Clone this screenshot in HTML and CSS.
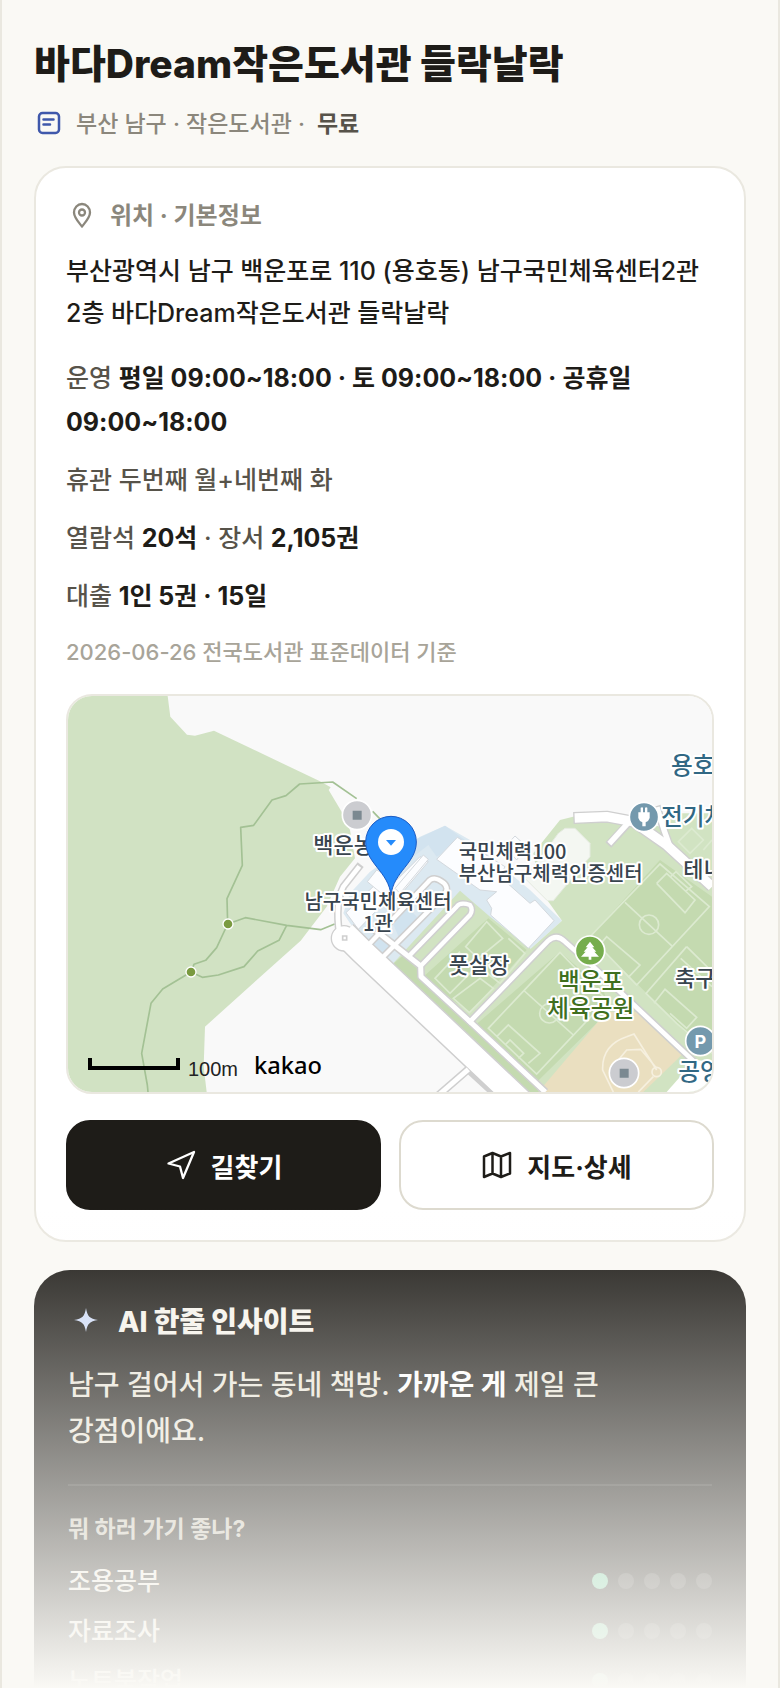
FILE: index.html
```
<!DOCTYPE html>
<html lang="ko">
<head>
    <meta charset="UTF-8">
    <meta name="viewport" content="width=device-width, initial-scale=1.0">
    <title>바다Dream작은도서관 들락날락</title>
    <link rel="stylesheet" href="styles.css">
</head>
<body>
    <main class="app">
        <h1 class="title">바다Dream작은도서관 들락날락</h1>
        <div class="meta">
            <svg class="meta-icon" viewBox="0 0 30 30" fill="none" stroke="#3f58ab" stroke-width="2.500" stroke-linecap="round">
                <rect x="5" y="4" width="20" height="20" rx="3.500"/>
                <path d="M9.500 10.500h10M9.500 15.500h6.500"/>
            </svg>
            <span>부산 남구 · 작은도서관 ·</span>
            <strong>무료</strong>
        </div>

        <section class="card">
            <h2 class="card-head">
                <svg class="head-icon" viewBox="0 0 32 32" fill="none" stroke="#8b877c" stroke-width="2.300">
                    <path d="M16 26.500C12 21.500 8 17.500 8 12.500a8 8.500 0 0 1 16 0C24 17.500 20 21.500 16 26.500z" stroke-linejoin="round"/>
                    <circle cx="16" cy="12.500" r="3"/>
                </svg>
                위치 · 기본정보
            </h2>
            <p class="address">부산광역시 남구 백운포로 110 (용호동) 남구국민체육센터2관 2층 바다Dream작은도서관 들락날락</p>
            <div class="info">
                <p>운영 <b>평일 09:00~18:00 · 토 09:00~18:00 · 공휴일 09:00~18:00</b></p>
                <p>휴관 두번째 월+네번째 화</p>
                <p>열람석 <b>20석</b> · 장서 <b>2,105권</b></p>
                <p>대출 <b>1인 5권 · 15일</b></p>
            </div>
            <p class="source">2026-06-26 전국도서관 표준데이터 기준</p>

            <div class="map">
                <svg viewBox="24 18 1932 1188" preserveAspectRatio="xMidYMid slice">
                    <rect x="24" y="18" width="1932" height="1188" fill="#f9f9f9"/>

                    <!-- 산 -->
                    <path fill="#d1e2c3" d="M24 18H323L331 80 381 134 405 137 462 122 780 274 812 292 806 300 844 364 870 420 885 505 840 560 800 650 722 752 435 1010 431 1130 440 1206H24z"/>
                    <g fill="none" stroke="#a3c194" stroke-width="5" stroke-linejoin="round">
                        <path d="M503 702L501 626 547 526 542 412 581 406 636 330 678 317 719 282 818 276 890 326M938 364L965 392"/>
                        <path d="M503 702L556 683 680 706 782 719 824 702M680 706L657 751 593 783 552 830 475 855 427 862 393 846 308 897 273 940 245 1090 262 1185 264 1206"/>
                        <path d="M503 702L470 773 437 811 402 823 393 846"/>
                    </g>
                    <g fill="#7a9a40" stroke="#fff" stroke-width="4">
                        <circle cx="504" cy="702" r="15"/>
                        <circle cx="393" cy="846" r="15"/>
                    </g>

                    <!-- 주차장, 공원 바닥 -->
                    <path fill="#dce9f1" d="M930 545L1080 440 1155 407 1230 450 1410 600 1506 692 1412 776 1345 745 1200 605 1140 670 1000 825 920 760 870 700 850 670 870 610z"/>
                    <path fill="#d2e3ef" d="M1070 447L1155 407 1215 450 1130 500 1105 465 1060 500z"/>
                    <path fill="#d1e3ef" d="M955 735L998 770 960 800 922 765zM990 680L1030 640 1080 690 1020 750z"/>
                    <path fill="#d1e3c2" d="M1200 602L1290 680 1412 776 1506 692 1440 600 1420 490 1500 390 1560 375 1700 380 1900 440 1956 500V1206H1460L1225 985 1090 900 990 830z"/>
                    <path fill="#d1e3c2" d="M1820 370L1956 370V600L1830 480z"/>
                    <path fill="#c4dab0" d="M1285 685L1400 780 1228 968 1090 860zM1500 785L1630 900 1650 960 1400 1206 1235 1015zM1800 510L1956 620V1090L1870 1020 1590 740zM985 835L1030 795 1075 840 1130 900 1440 1206H1390z"/>
                    <path fill="#f4f7f2" stroke="#e5ebe0" stroke-width="3" d="M1495 430L1515 415H1545L1590 460 1590 500 1480 632 1462 632 1395 565z"/>

                    <!-- 운동장 라인 -->
                    <g fill="none" stroke="#dcead0" stroke-width="5">
                        <path d="M1800 522L1948 650 1730 885 1590 740zM1695 637L1838 770M1790 580L1820 550 1905 630 1875 668 1790 580M1832 560L1848 545 1895 590 1875 605"/>
                        <circle cx="1767" cy="704" r="29"/>
                        <path d="M1610 775L1640 740 1740 825 1705 862M1880 770L1758 910 1850 1000 1956 1090M1880 770L1956 845M1862 805L1956 890"/>
                        <path d="M1782 940L1815 898 1910 982 1880 1015 1830 970"/>
                        <path d="M1500 787L1285 1015 1430 1152 1640 930zM1390 900L1540 1035M1310 1040L1345 1005 1440 1090 1405 1120M1335 1065L1350 1050 1391 1090 1375 1105"/>
                        <circle cx="1468" cy="970" r="29"/>
                        <path d="M1280 695L1217 770 1255 805 1328 745zM1345 745L1395 790 1320 880 1270 840M1200 785L1125 865 1170 910 1250 830M1260 865L1180 925 1228 968 1300 895z"/>
                        <path d="M1895 415L1930 450 1890 490 1855 455zM1930 480L1956 450"/>
                    </g>

                    <!-- 야구장 -->
                    <path fill="#eadfc0" d="M1640 965H1730L1865 1095 1750 1206H1435z"/>
                    <g fill="none" stroke="#f6f0df" stroke-width="5">
                        <path d="M1660 1206L1628 1140Q1625 1065 1700 1040L1722 1032 1790 1140M1675 1110L1700 1080 1742 1078 1790 1135"/>
                        <circle cx="1790" cy="1146" r="14"/>
                        <path d="M1780 1160L1735 1206"/>
                    </g>

                    <!-- 건물 -->
                    <g fill="#fcfdff" stroke="#d4d9de" stroke-width="3">
                        <path d="M1192 442L1130 508 1260 600 1310 605 1280 630 1295 655 1292 675 1405 775 1482 692 1425 630 1410 640 1320 560 1335 530z"/>
                        <path d="M1335 470L1365 438 1400 470 1370 510z"/>
                        <path d="M858 668L950 580 990 620 895 718z"/>
                        <path d="M922 575L950 540 1010 570 1080 500 1105 515 1000 640z"/>
                        <path d="M1090 495L1105 508 1020 610 1005 595z"/>
                    </g>

                    <!-- 도로 -->
                    <g fill="none" stroke-linejoin="round">
                        <g stroke="#cfcfcf">
                            <circle cx="852" cy="745" r="20" stroke-width="40"/>
                            <path stroke-width="80" d="M852 730L907 785 1450 1298"/>
                            <path stroke-width="23" d="M902 524L850 590Q825 640 838 730"/>
                            <path stroke-width="24" d="M945 720L1082 828 1083 860 1230 995 1456 1206"/>
                            <path stroke-width="23" d="M1230 995L1465 752Q1490 730 1515 755L1600 830 1950 1160"/>
                            <path stroke-width="22" d="M925 765L1105 575Q1120 555 1150 578 1170 595 1150 618L970 800M1050 795L1190 650Q1200 635 1230 645 1240 660 1230 675L1085 825"/>
                            <path stroke-width="36" d="M1540 384L1640 380 1720 395 1820 465 1956 590"/>
                            <path stroke-width="24" d="M1645 465L1705 400M1790 348L1812 420 1830 470"/>
                            <path stroke-width="24" d="M1225 1138L1135 1216M1225 1138L1310 1216"/>
                        </g>
                        <g stroke="#fff">
                            <circle cx="852" cy="745" r="18" stroke-width="36"/>
                            <path stroke-width="71" d="M852 730L907 785 1450 1298"/>
                            <path stroke-width="14" d="M898 529L850 590Q825 640 838 730"/>
                            <path stroke-width="15" d="M949 723L1082 828 1083 860 1230 995 1456 1206"/>
                            <path stroke-width="14" d="M1225 1000L1465 752Q1490 730 1515 755L1600 830 1950 1160"/>
                            <path stroke-width="13" d="M925 765L1105 575Q1120 555 1150 578 1170 595 1150 618L966 804M1050 795L1190 650Q1200 635 1230 645 1240 660 1230 675L1085 825"/>
                            <path stroke-width="28" d="M1544 384L1640 380 1720 395 1820 465 1956 590"/>
                            <path stroke-width="16" d="M1648 461L1708 395M1791 352L1812 420 1830 470"/>
                            <path stroke-width="15" d="M1225 1138L1135 1216"/>
                        </g>
                    </g>
                    <path d="M848 738h12v12h-12z" fill="#fff" stroke="#cfcfcf" stroke-width="5"/>
                    <path d="M1820 1206L1905 1110 1956 1115V1206z" fill="#fff"/>

                    <!-- 장소 아이콘 -->
                    <g stroke="#fff" stroke-width="5">
                        <circle cx="891" cy="375" r="44" fill="#cbccd0"/>
                        <circle cx="1692" cy="1149" r="44" fill="#cbccd0"/>
                        <circle cx="1752" cy="381" r="44" fill="#7499ad"/>
                        <circle cx="1921" cy="1053" r="44" fill="#7499ad"/>
                        <circle cx="1590" cy="782" r="44" fill="#76ad4d"/>
                    </g>
                    <path fill="#7b8991" d="M878 362h27v27h-27zM1679 1136h27v27h-27z"/>
                    <path fill="#fff" d="M1742 353q5-3 7 0v14h6v-14q4-3 7 0v14h7v17q-3 10-12 13v12h-10v-12q-9-3-12-13v-17h7z"/>
                    <path fill="#fff" d="M1590 755l13 17h-6l12 13h-6l14 15h-23v9h-8v-9h-23l14-15h-6l12-13h-6z"/>

                    <!-- 지명 -->
                    <g class="label">
                        <text class="poi" x="760" y="490">백운농장</text>
                        <text class="place" x="954" y="656" text-anchor="middle">남구국민체육센터</text>
                        <text class="place" x="954" y="724" text-anchor="middle">1관</text>
                        <text class="place" x="1196" y="506">국민체력100</text>
                        <text class="place" x="1196" y="573">부산남구체력인증센터</text>
                        <text class="poi" x="1166" y="848">풋살장</text>
                        <text class="poi" x="1870" y="562">테니스장</text>
                        <text class="poi" x="1845" y="888">축구장</text>
                        <text class="park" x="1592" y="900" text-anchor="middle">백운포</text>
                        <text class="park" x="1592" y="980" text-anchor="middle">체육공원</text>
                        <text class="transit" x="1833" y="253">용호동</text>
                        <text class="transit" x="1803" y="406">전기차</text>
                        <text class="transit" x="1855" y="1170">공영주차장</text>
                    </g>
                    <text class="label-p" x="1921" y="1073" text-anchor="middle">P</text>

                    <!-- 핀 -->
                    <path fill="#258bfb" stroke="#1c5cc4" stroke-width="3" d="M993 616C986 545 917 520 917 456a76 77 0 0 1 152 0C1069 520 1000 545 993 616z"/>
                    <circle cx="993" cy="456" r="39" fill="#fff"/>
                    <path fill="#258bfb" d="M978 450h30l-15 17z"/>

                    <!-- 축척 -->
                    <path fill="none" stroke="#000" stroke-width="12" d="M90 1104V1134H354V1104"/>
                    <text class="scale" x="384" y="1157">100m</text>
                    <text class="brand" x="582" y="1151">kakao</text>
                </svg>
            </div>

            <div class="actions">
                <button class="btn btn-dark" type="button">
                    <svg viewBox="0 0 32 32" fill="none" stroke="currentColor" stroke-width="2.300" stroke-linejoin="round"><path d="M3.500 14.500L29 3 18 29 15 17.500z"/></svg>
                    길찾기
                </button>
                <button class="btn btn-line" type="button">
                    <svg viewBox="0 0 32 32" fill="none" stroke="currentColor" stroke-width="2.500" stroke-linejoin="round"><path d="M3 7.500L11.500 4 20 7.500 29 4V24.500L20 28 11.500 24.500 3 28zM11.500 4V24.500M20 7.500V28"/></svg>
                    지도·상세
                </button>
            </div>
        </section>

        <section class="insight">
            <h2 class="insight-head">
                <svg viewBox="0 0 36 36"><path fill="#cfdcf8" d="M18 4C19.500 12.500 21.500 14.500 30 16 21.500 17.500 19.500 19.500 18 28 16.500 19.500 14.500 17.500 6 16 14.500 14.500 16.500 12.500 18 4z"/></svg>
                AI 한줄 인사이트
            </h2>
            <p class="insight-text">남구 걸어서 가는 동네 책방. <b>가까운 게</b> 제일 큰 강점이에요.</p>
            <div class="uses">
                <h3>뭐 하러 가기 좋나?</h3>
                <ul>
                    <li>조용공부 <span class="dots"><i class="on"></i><i></i><i></i><i></i><i></i></span></li>
                    <li>자료조사 <span class="dots"><i class="on"></i><i></i><i></i><i></i><i></i></span></li>
                    <li>노트북작업 <span class="dots"><i class="on"></i><i></i><i></i><i></i><i></i></span></li>
                </ul>
            </div>
        </section>
        <div class="fade"></div>
    </main>
</body>
</html>
```
FILE: styles.css
```
* {
    box-sizing: border-box;
}

body {
    margin: 0;
    font-family: Inter, "Noto Sans CJK KR", sans-serif;
    font-weight: 500;
    background-color: #faf9f5;
    color: #1e1c18;
    word-break: keep-all;
}

h1, h2, h3, p, ul {
    margin: 0;
    padding: 0;
}

.app {
    position: relative;
    height: 100vh;
    overflow: hidden;
    padding: 40px 32px 0;
    border-left: 2px solid #eae8e0;
    border-right: 2px solid #eae8e0;
}

.title {
    font-size: 39px;
    line-height: 48px;
    font-weight: 800;
}

.meta {
    display: flex;
    align-items: center;
    gap: 12px;
    margin: 18px 0 24px;
    font-size: 23px;
    line-height: 36px;
    color: #8b877c;
}

.meta-icon {
    width: 30px;
    height: 30px;
}

.meta strong {
    color: #57534a;
    font-weight: 700;
}

.card {
    padding: 30px;
    background-color: #fff;
    border: 2px solid #eae8e0;
    border-radius: 32px;
}

.card-head {
    display: flex;
    align-items: center;
    gap: 12px;
    font-size: 24px;
    line-height: 36px;
    font-weight: 700;
    color: #8b877c;
}

.head-icon {
    width: 32px;
    height: 32px;
}

.address {
    margin-top: 16px;
    font-size: 25px;
    line-height: 42px;
}

.info {
    display: flex;
    flex-direction: column;
    gap: 14px;
    margin-top: 22px;
    font-size: 25px;
    line-height: 44px;
    color: #57534a;
}

.info b {
    color: #1e1c18;
    font-weight: 700;
}

.source {
    margin-top: 18px;
    font-size: 22px;
    line-height: 32px;
    color: #a8a499;
}

/* 지도 */
.map {
    margin-top: 26px;
    border: 2px solid #eae8e0;
    border-radius: 26px;
    overflow: hidden;
}

.map svg {
    display: block;
    width: 100%;
}

.label {
    font-family: "Noto Sans CJK KR", sans-serif;
    font-weight: 500;
    fill: #38444e;
    stroke: #fff;
    stroke-width: 12px;
    stroke-linejoin: round;
    paint-order: stroke;
}

.place {
    font-size: 60px;
}

.poi {
    font-size: 66px;
}

.park {
    font-size: 71px;
    fill: #3f6f1e;
}

.transit {
    font-size: 71px;
    fill: #316884;
}

.label-p {
    font: 700 54px Inter, sans-serif;
    fill: #fff;
}

.scale {
    font: 60px "Liberation Sans", sans-serif;
    fill: #222;
}

.brand {
    font: 500 71px "Noto Sans", sans-serif;
}

.actions {
    display: flex;
    gap: 18px;
    margin-top: 26px;
}

.btn {
    flex: 1;
    display: flex;
    align-items: center;
    justify-content: center;
    gap: 14px;
    height: 90px;
    border: 2px solid #1e1c18;
    border-radius: 24px;
    font-family: inherit;
    font-size: 26px;
    font-weight: 700;
    cursor: pointer;
}

.btn svg {
    width: 32px;
    height: 32px;
}

.btn-dark {
    background-color: #1e1c18;
    color: #fff;
}

.btn-line {
    background-color: #fff;
    border-color: #dddacf;
    color: #1e1c18;
}

/* AI 인사이트 */
.insight {
    margin-top: 28px;
    padding: 34px;
    background-color: #1e1c18;
    border-radius: 36px;
    color: #f3f0e8;
}

.insight-head {
    display: flex;
    align-items: center;
    gap: 14px;
    font-size: 28px;
    line-height: 36px;
    font-weight: 800;
    color: #f6f3ec;
}

.insight-head svg {
    width: 36px;
    height: 36px;
}

.insight-text {
    margin-top: 22px;
    font-size: 28px;
    line-height: 46px;
    color: #eae6da;
}

.insight-text b {
    color: #fff;
    font-weight: 700;
}

.uses {
    margin-top: 30px;
    padding-top: 27px;
    border-top: 2px solid rgba(255, 255, 255, 0.1);
}

.uses h3 {
    font-size: 23px;
    line-height: 32px;
    font-weight: 700;
    color: #c9c5b9;
}

.uses ul {
    display: flex;
    flex-direction: column;
    gap: 14px;
    margin-top: 18px;
    list-style: none;
}

.uses li {
    display: flex;
    align-items: center;
    justify-content: space-between;
    font-size: 25px;
    line-height: 36px;
}

.dots {
    display: flex;
    gap: 10px;
}

.dots i {
    width: 16px;
    height: 16px;
    border-radius: 50%;
    background-color: rgba(255, 255, 255, 0.16);
}

.dots .on {
    background-color: #6fcfa0;
}

.fade {
    position: absolute;
    left: 0;
    right: 0;
    bottom: 0;
    height: 480px;
    background: linear-gradient(rgba(250, 249, 245, 0), #faf9f5);
    pointer-events: none;
}
```
